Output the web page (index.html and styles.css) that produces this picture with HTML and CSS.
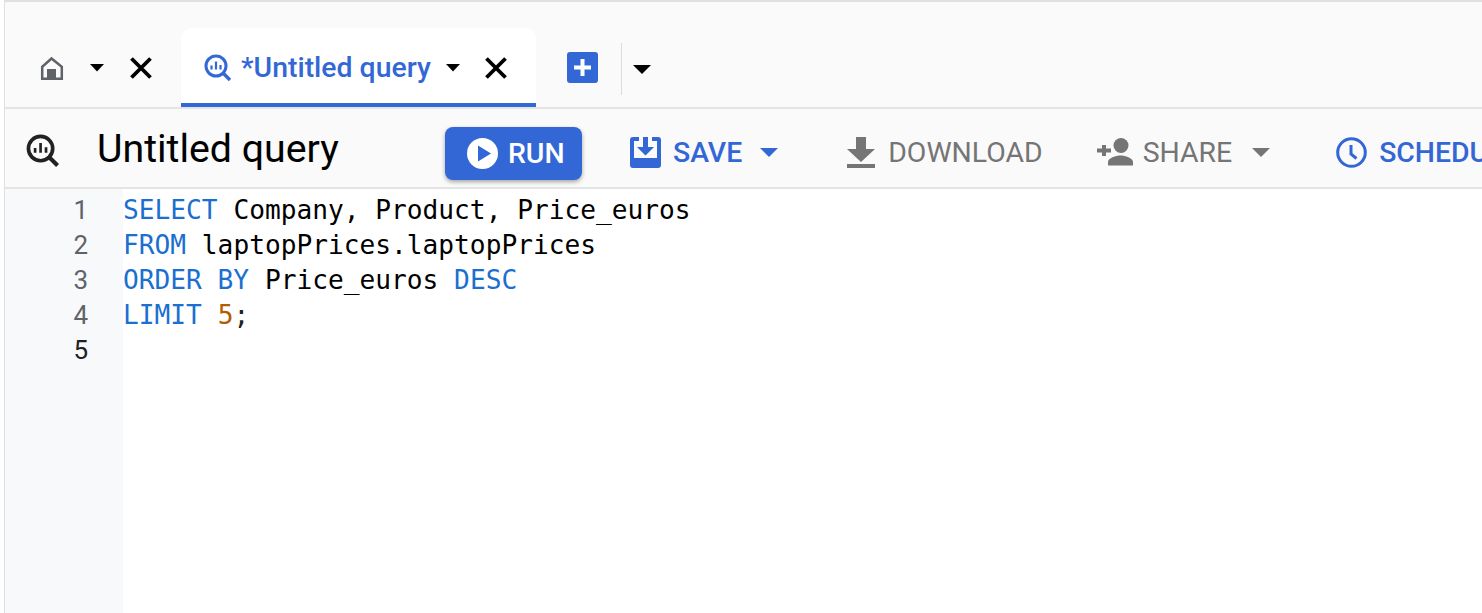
FILE: index.html
```html
<!DOCTYPE html>
<html lang="en">
<head>
<meta charset="utf-8">
<title>Untitled query</title>
<link rel="stylesheet" href="styles.css">
</head>
<body>
<div class="app">
  <div class="tabbar">
    <div class="tab home-tab">
      <svg class="home-icon" width="24" height="24" viewBox="0 0 24 24"><path fill="none" stroke="#5f6368" stroke-width="2.500" d="M11.500 2.500 2.200 10.800V22.800H21.800V10.800z"/><path fill="#5f6368" d="M7 13h9v10H7z"/></svg>
      <svg class="caret home-caret" width="16" height="8" viewBox="0 0 16 8"><path d="M1 0h14L8 7.500z"/></svg>
      <svg class="close" width="24" height="24" viewBox="0 0 24 24"><path d="M2.500 2.500 21.500 21.500M21.500 2.500 2.500 21.500" stroke="#000" stroke-width="3.800" fill="none"/></svg>
    </div>
    <div class="tab query-tab">
      <svg width="28" height="28" viewBox="0 0 28 28" class="q-icon"><circle cx="12" cy="12" r="10" fill="none" stroke="#3367d6" stroke-width="3"/><path d="M18.500 18.500 26 26" stroke="#3367d6" stroke-width="3.400"/><path d="M7.500 11.500v4M12 7.500v8M16.500 11v4.500" stroke="#3367d6" stroke-width="2.200"/></svg>
      <span class="tab-title">*Untitled query</span>
      <svg class="caret query-caret" width="16" height="8" viewBox="0 0 16 8"><path d="M1 0h14L8 7.500z"/></svg>
      <svg class="close" width="24" height="24" viewBox="0 0 24 24"><path d="M2.500 2.500 21.500 21.500M21.500 2.500 2.500 21.500" stroke="#000" stroke-width="3.800" fill="none"/></svg>
    </div>
    <svg class="add-icon" width="31" height="31" viewBox="0 0 31 31"><rect width="31" height="31" rx="3" fill="#3367d6"/><path d="M15.500 7v17M7 15.500h17" stroke="#fff" stroke-width="4"/></svg>
    <div class="divider"></div>
    <svg class="caret add-caret" width="18" height="9" viewBox="0 0 18 9"><path d="M0 0h18L9 9z"/></svg>
  </div>
  <div class="toolbar">
    <svg class="title-icon" width="34" height="34" viewBox="0 0 28 28"><circle cx="12" cy="12" r="10" fill="none" stroke="#212121" stroke-width="3"/><path d="M18.500 18.500 26 26" stroke="#212121" stroke-width="3.400"/><path d="M7.500 11.500v4M12 7.500v8M16.500 11v4.500" stroke="#212121" stroke-width="2.200"/></svg>
    <div class="query-title">Untitled query</div>
    <button class="run-btn">
      <svg width="31" height="31" viewBox="0 0 31 31"><circle cx="15.500" cy="15.500" r="15.500" fill="#fff"/><path d="M11 7.500v16l13-8z" fill="#3367d6"/></svg>
      <span>RUN</span>
    </button>
    <div class="action blue save">
      <svg width="31" height="31" viewBox="0 0 31 31"><path fill="#3367d6" fill-rule="evenodd" d="M3 0h6v4H4v17h23V4h-5V0h6q3 0 3 3v25q0 3-3 3H3q-3 0-3-3V3q0-3 3-3z"/><path fill="#3367d6" d="M13 0h5v10h6l-8.500 8.500L7 10h6z"/></svg>
      <span>SAVE</span>
      <svg class="a-caret save-caret" width="18" height="9" viewBox="0 0 18 9"><path fill="#3367d6" d="M0 0h18L9 9z"/></svg>
    </div>
    <div class="action grey download">
      <svg width="28" height="31" viewBox="0 0 28 31"><path fill="#757575" d="M9 0h10v12h9L14 25 0 12h9zM0 27h28v4H0z"/></svg>
      <span>DOWNLOAD</span>
    </div>
    <div class="action grey share">
      <svg width="36" height="28" viewBox="0 0 36 28"><circle cx="24" cy="7.500" r="7.500" fill="#757575"/><path fill="#757575" d="M11 27.500v-3.500c0-4 8-6.500 12.500-6.500S36 20 36 24v3.500zM5 7h4v3.500h5v4H9V18H5v-3.500H0v-4h5z"/></svg>
      <span>SHARE</span>
      <svg class="a-caret share-caret" width="18" height="9" viewBox="0 0 18 9"><path fill="#757575" d="M0 0h18L9 9z"/></svg>
    </div>
    <div class="action blue schedule">
      <svg width="31" height="31" viewBox="0 0 31 31"><circle cx="15.500" cy="15.500" r="13.800" fill="none" stroke="#3367d6" stroke-width="3"/><path d="M15 8v9l5.500 4.500" fill="none" stroke="#3367d6" stroke-width="3"/></svg>
      <span>SCHEDULE</span>
    </div>
  </div>
  <div class="editor">
    <div class="gutter">
      <div class="ln">1</div>
      <div class="ln">2</div>
      <div class="ln">3</div>
      <div class="ln">4</div>
      <div class="ln cur">5</div>
    </div>
    <div class="code">
      <div class="line"><span class="kw">SELECT</span> Company, Product, Price_euros</div>
      <div class="line"><span class="kw">FROM</span> laptopPrices.laptopPrices</div>
      <div class="line"><span class="kw">ORDER BY</span> Price_euros <span class="kw">DESC</span></div>
      <div class="line"><span class="kw">LIMIT</span> <span class="num">5</span><span class="semi">;</span></div>
      <div class="line">&nbsp;</div>
    </div>
  </div>
</div>
</body>
</html>
```
FILE: styles.css
```css
* { box-sizing: border-box; }
html, body { margin: 0; height: 100%; overflow: hidden; background: #fff; }
body { font-family: Roboto, sans-serif; }
.app { height: 613px; width: 1478px; margin-left: 4px; border-left: 1px solid #e0e0e0; border-top: 2px solid #e0e0e4; display: flex; flex-direction: column; overflow: hidden; background: #fafafa; }
svg { flex: none; display: block; }
.tabbar { height: 107px; flex: none; display: flex; align-items: flex-end; border-bottom: 2px solid #e4e4e4; padding-left: 23px; }
.tab { display: flex; align-items: center; height: 78px; flex: none; }
.home-tab { width: 153px; padding-bottom: 1px; }
.home-icon { margin-left: 12px; }
.caret path { fill: #000; }
.home-caret { margin-left: 25px; }
.home-tab .close { margin-left: 24px; }
.query-tab { width: 355px; height: 79px; background: #fff; border-radius: 11px 11px 0 0; border-bottom: 4px solid #3367d6; padding: 4px 0 0 23px; }
.tab-title { font-size: 28.400px; font-weight: 500; color: #3367d6; margin-left: 9px; white-space: nowrap; }
.query-caret { margin-left: 14px; }
.query-tab .close { margin-left: 23px; }
.add-icon { margin-left: 31px; margin-bottom: 24px; }
.divider { width: 1px; height: 52px; background: #dcdcdc; margin-left: 23px; margin-bottom: 12px; }
.add-caret { margin-left: 11px; margin-bottom: 33px; }
.toolbar { height: 80px; flex: none; display: flex; align-items: center; border-bottom: 2px solid #e4e4e4; }
.toolbar > * { flex: none; }
.title-icon { margin-left: 21px; margin-top: 6px; }
.query-title { font-size: 39.300px; color: #000; margin: 2px 0 0 37px; width: 348px; white-space: nowrap; }
.run-btn { display: flex; align-items: center; gap: 10px; width: 137px; height: 53px; margin-top: 10px; padding: 0 0 0 22px; border: 0; border-radius: 8px; background: #3367d6; color: #fff; font: 500 28.400px Roboto, sans-serif; box-shadow: 0 2px 4px rgba(0,0,0,.35); }
.action { display: flex; align-items: center; font-size: 28.400px; font-weight: 500; white-space: nowrap; margin-top: 8px; }
.blue { color: #3367d6; }
.grey { color: #757575; font-weight: 400; }
.save-caret { margin-left: 6px; }
.share-caret { margin-left: 10px; }
.save { margin-left: 48px; gap: 12px; }
.download { margin-left: 69px; gap: 13px; }
.share { margin-left: 54px; gap: 10px; }
.schedule { margin-left: 66px; gap: 12px; }
.editor { flex: 1; display: flex; background: #fff; }
.gutter { width: 118px; flex: none; background: #f8f9fa; padding: 4px 35px 0 0; font-size: 26px; color: #5f6368; text-align: right; }
.ln { height: 35px; line-height: 35px; }
.cur { color: #212121; }
.code { padding-top: 4px; font-family: "DejaVu Sans Mono", monospace; font-size: 26.200px; color: #000; }
.line { height: 35px; line-height: 35px; white-space: pre; }
.kw { color: #1a6fd0; }
.num { color: #b35c00; }
.semi { color: #212121; }
```
